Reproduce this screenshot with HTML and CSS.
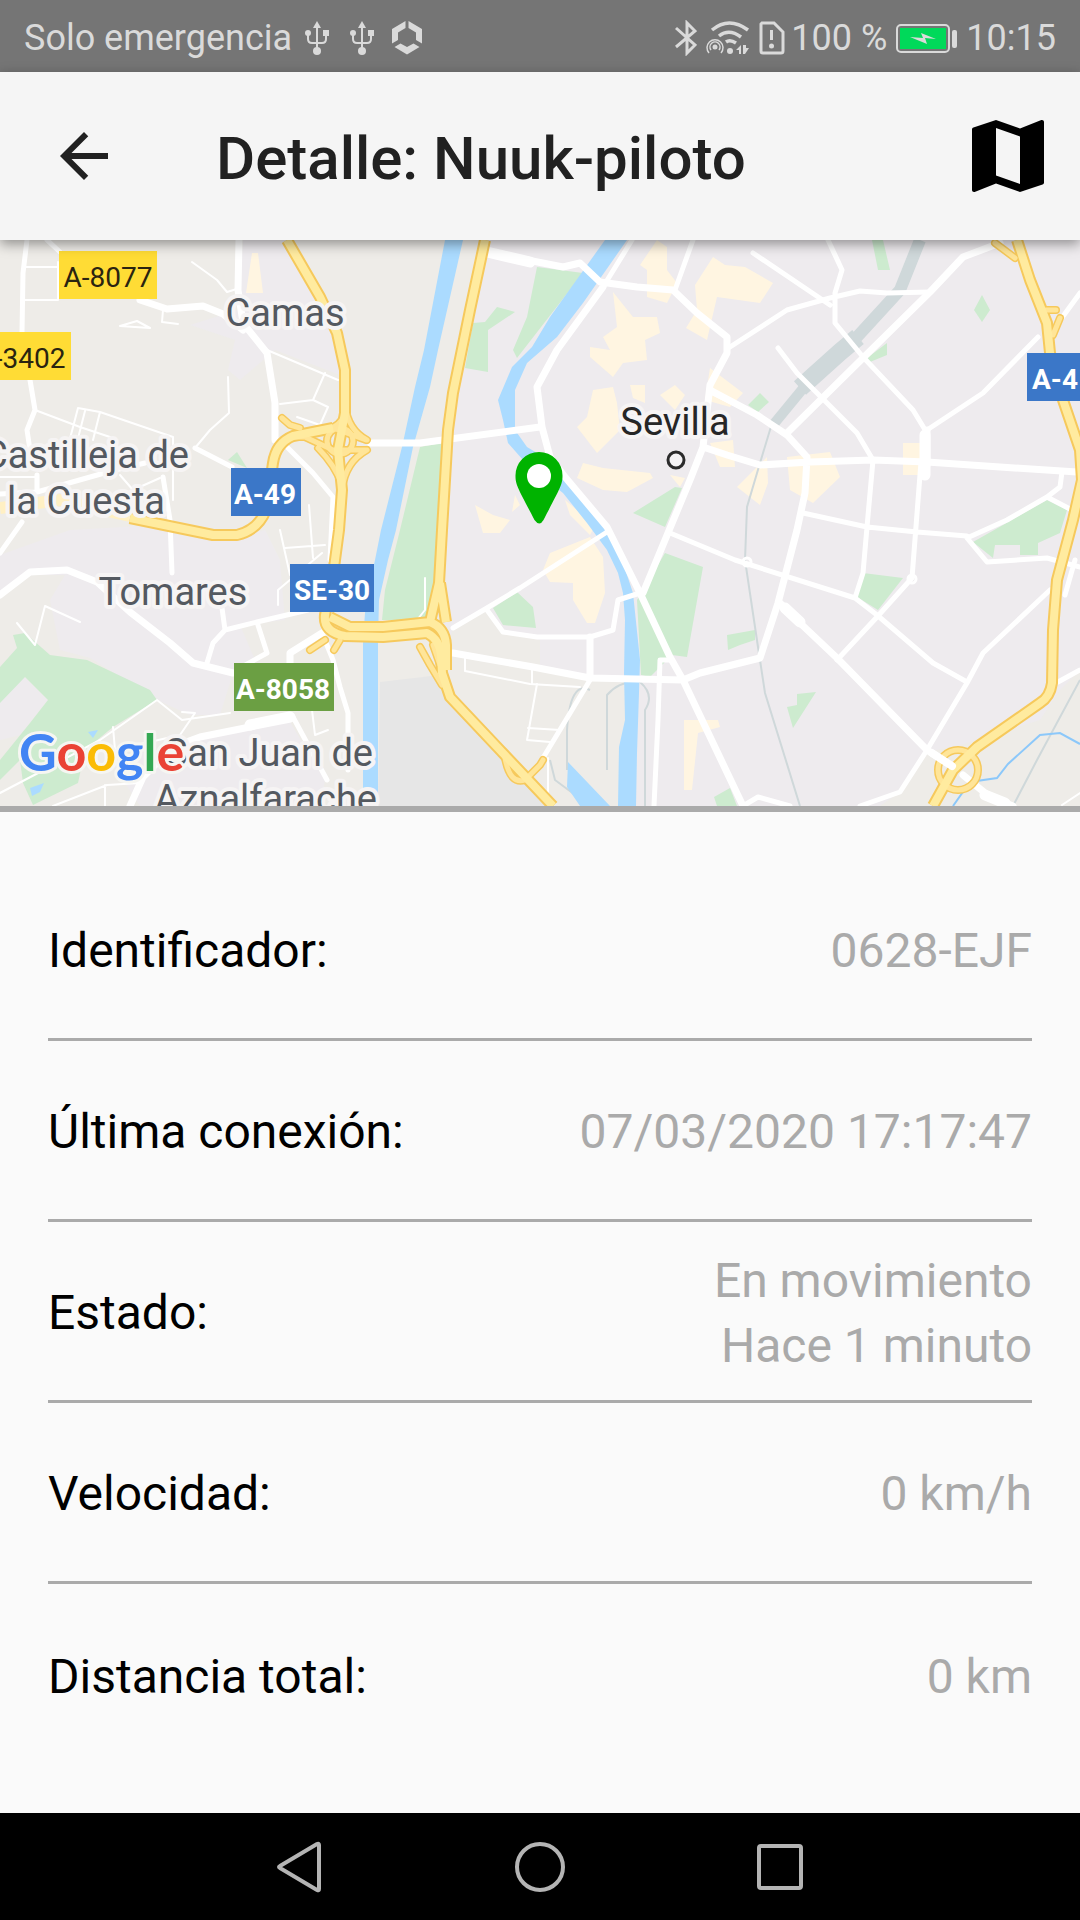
FILE: index.html
```html
<!DOCTYPE html>
<html lang="es">
<head>
<meta charset="utf-8">
<meta name="viewport" content="width=device-width, initial-scale=1">
<title>Detalle: Nuuk-piloto</title>
<link rel="stylesheet" href="styles.css">
</head>
<body>
<div class="status">
  <div class="status-group">
    <span>Solo emergencia</span>
    <svg class="usb" width="24" height="36" viewBox="0 0 24 36" aria-hidden="true"><path d="M12 5v26M3 12v7q0 4 4 4h10q4 0 4-4v-7" fill="none" stroke="currentColor" stroke-width="2"/><path d="M12 1l4 7H8z"/><circle cx="3" cy="13" r="3"/><path d="M18 10h6v6h-6z"/><circle cx="12" cy="31" r="4"/></svg>
    <svg class="usb" width="24" height="36" viewBox="0 0 24 36" aria-hidden="true"><path d="M12 5v26M3 12v7q0 4 4 4h10q4 0 4-4v-7" fill="none" stroke="currentColor" stroke-width="2"/><path d="M12 1l4 7H8z"/><circle cx="3" cy="13" r="3"/><path d="M18 10h6v6h-6z"/><circle cx="12" cy="31" r="4"/></svg>
    <svg width="32" height="36" viewBox="0 0 32 36" aria-hidden="true"><path d="M14.500 1v7L7 12.500V20l-6 3.500V9zM17.500 1v7l7.500 4.500V20l6 3.500V9zM3.500 27l6-3.500 6.500 3.500 6.500-3.500 6 3.500L16 34.500z"/></svg>
  </div>
  <div class="status-group">
    <svg width="22" height="36" viewBox="0 0 22 36" aria-hidden="true"><path d="M1 8l19 17-8 8V3l8 8L1 27" fill="none" stroke="currentColor" stroke-width="3"/></svg>
    <svg class="wifi" width="46" height="36" viewBox="0 0 46 36" aria-hidden="true"><g fill="none" stroke="currentColor"><path d="M7 10q17-14 36 0M14 16q10-8 22 1M21 22q4-3 10 1" stroke-width="3.500"/><path d="M4 33a8 8 0 1 1 12 0M6 30a5 5 0 1 1 8 0" stroke-width="1.500"/></g><circle cx="10" cy="27" r="2.500"/><circle cx="25" cy="31" r="3"/><path d="M36 25v9h-2v-4h-3zM38 25v9h2l4-6h-3v-3z"/></svg>
    <svg class="sim" width="26" height="36" viewBox="0 0 26 36" aria-hidden="true"><path d="M3 3h12l9 9v19q0 2-2 2H4q-2 0-2-2V4z" fill="none" stroke="currentColor" stroke-width="3"/><path d="M11 10h3v10h-3z"/><circle cx="12.500" cy="26" r="2.500"/></svg>
    <span class="charge">100 %</span>
    <svg width="62" height="36" viewBox="0 0 62 36" aria-hidden="true"><rect x="1" y="5" width="52" height="27" rx="4" fill="none" stroke="currentColor" stroke-width="2"/><rect x="4" y="8" width="46" height="21" fill="#00d95a"/><path d="M14 17l13 1-2-5 15 6-11-1 2 6z"/><rect x="56" y="10" width="5" height="18" rx="2"/></svg>
    <span class="clock">10:15</span>
  </div>
</div>

<header class="bar">
  <button type="button" aria-label="Volver"><svg width="72" height="72" viewBox="0 0 24 24" fill="#212121"><path d="M20 11H7.830l5.590-5.590L12 4l-8 8 8 8 1.410-1.410L7.830 13H20v-2z"/></svg></button>
  <h1>Detalle: Nuuk-piloto</h1>
  <button type="button" aria-label="Ver mapa"><svg width="96" height="96" viewBox="0 0 24 24"><path d="M20.500 3l-.16.030L15 5.100 9 3 3.360 4.900c-.21.070-.36.250-.36.480V20.500c0 .28.220.5.500.5l.16-.03L9 18.900l6 2.100 5.640-1.900c.21-.07.360-.25.360-.48V3.500c0-.28-.22-.5-.5-.5zM15 19l-6-2.110V5l6 2.110V19z"/></svg></button>
</header>

<main>
<svg class="map" viewBox="0 240 1080 566" role="img" aria-label="Mapa de Sevilla">
  <rect class="urban" y="240" width="1080" height="566"/>
  <g class="rural">
    <path d="M0 240H485L453 393 440 590 445 650 453 628 487 610 503 632 540 640V668L590 680 625 680V806H0z"/>
    <path d="M1080 670L1060 690 1040 720 960 745 927 752 900 792 880 806H1080z"/>
  </g>
  <g class="urban">
    <path d="M243 240H290L325 300 340 375 275 350 240 380 228 370 235 340 190 325 238 310z"/>
    <path d="M0 555L70 530 160 525 230 540 265 530 280 560 285 620 240 625 255 660 233 673 220 715 190 715 157 700 90 658 60 650 50 600 65 575 30 575 0 598z"/>
    <path d="M0 690L25 677 48 700 20 735 0 740zM110 760L200 740 290 722 325 780 320 806H140z"/>
  </g>
  <path class="field" d="M380 682L440 675 450 700 545 806H378z"/>
  <g class="park">
    <path d="M13 635L25 633 50 655 87 660 150 690 157 700 113 727 85 750 78 783 33 805 23 783 20 760 0 780 0 760 30 723 48 700 25 677 0 703V667L17 648z"/>
    <path d="M537 267L583 273 517 358 513 350 527 317zM473 323L485 322 497 307 515 312 488 330V372L465 368z"/>
    <path d="M420 447L442 443 437 590 425 620H382L385 590 400 530zM633 513L675 487 682 488 665 527z"/>
    <path d="M665 553L703 567 687 657 672 655 650 677 641 675 637 600zM493 608L517 592 533 607 536 628 503 625z"/>
    <path d="M872 240H883L890 270H878zM982 295L990 310 982 322 974 310zM760 393L769 402 758 412 748 405zM887 343V355L870 362 867 358z"/>
    <path d="M863 573L903 578 878 610 857 597zM973 542L1047 500 1067 510 1060 533 1038 543V555H1020V545H995L993 558z"/>
    <path d="M727 635L755 630V640L740 645 728 650zM787 707L797 705V694L816 692 793 728zM714 797L730 788 737 806H717zM228 460L237 452 247 468z"/>
  </g>
  <g class="centre">
    <path d="M657 240L667 247V270L677 283 667 303 647 297V270L640 265zM613 292L633 317H657L660 333 645 340 647 360 623 363 613 377 590 357V347L610 350 603 337 617 327z"/>
    <path d="M593 390L613 387 617 403 620 430 597 453 577 427 587 417zM583 463L603 468 650 473 653 478 627 492 603 490 577 478zM630 385H645V403L633 398z"/>
    <path d="M713 257L725 265 745 267 773 283 760 303 717 297 707 340 686 328 697 310 695 285zM660 395L675 385 685 395 675 410z"/>
    <path d="M787 457L830 452 840 477 813 503 790 490zM737 487L767 457 768 483 760 505zM903 443H920V475H903zM710 368L743 393 730 407 705 400zM710 443L733 440 735 467H720z"/>
    <path d="M550 553L590 537 603 557 605 593 595 623H587L573 600V583L550 582 543 570zM475 505L493 515 510 520 500 533H483zM515 495L520 505 512 512zM565 500L595 525 590 535 570 515z"/>
    <path d="M684 720H718L720 727 698 733 692 790H684zM252 253H258L263 293H246zM670 475L685 478 680 487z"/>
  </g>
  <g class="rail">
    <path d="M920 240L900 290 857 337" stroke-width="12"/>
    <path d="M858 337L840 352 800 388" stroke-width="18"/>
    <path d="M810 380L773 425" stroke-width="10"/>
    <path d="M773 420L760 463 747 507 745 560 758 647 765 693 800 806M1080 680L1037 760 1013 806M590 690Q570 680 567 730V770M607 770V695Q620 680 640 682Q655 695 645 710V806M550 760L555 780 590 806" stroke-width="2"/>
  </g>
  <g class="water">
    <path d="M445 240L424 350 415 387 402 447 381 530 375 560 366 600 363 640V806H378V640L379 600 388 560 396 530 413 447 430 387 438 350 463 240z"/>
    <path d="M605 240L550 317 532 347 512 367 498 400 503 420 508 443 523 460 540 475 563 493 587 523 607 550 618 573 623 593 625 620 624 673 625 720 619 747 618 806H636L637 753 639 693 640 660 633 593 623 563 605 527 567 483 537 453 527 447 515 430V390L527 363 557 337 583 303 627 240z"/>
    <path d="M568 762L610 806H580L567 787zM88 732L98 730 93 738zM30 788L44 783 40 792 32 796z"/>
    <path d="M953 806L970 782 997 778 1008 764 1040 735 1060 733 1080 744" fill="none" stroke="#8cc8fa" stroke-width="2"/>
  </g>

  <g class="street">
    <g stroke-width="2">
      <path d="M192 262L217 280 227 292 240 288M25 267H58M25 300H58V262M120 326L137 321 150 328zM178 324L162 322 163 310M267 350L338 380M325 373L313 400 280 404M313 400L328 407 320 425 297 417M228 377L229 413 210 430 195 448M35 410L80 427 110 437M78 408L100 412 173 437V500M78 408L67 450M100 412L93 440M85 411L75 450M0 477H37M120 475L133 490 160 478"/>
      <path d="M45 606L35 645 17 623M45 606L80 622M0 793L40 772 100 740 157 700 182 720 230 713M113 727L115 750 180 735 195 713 182 712M53 806L107 785 140 783M105 785V806M280 530L290 575M285 548L325 545M309 505L313 558M322 553L278 590V605M312 710L315 735 328 730M465 657V671L530 684 580 687M537 684L527 740 550 742M528 728L560 730M532 667V684M548 758V792M425 578V610L417 620M1062 805L1080 793"/>
    </g>
    <g stroke-width="5">
      <path d="M27 240L23 273 22 332 30 380 35 410 27 430 30 450M47 240L60 252M195 448L232 467M283 443L313 473 333 497 330 560M37 475V492L0 494M37 492L115 470 145 463M163 477L170 520 172 573M0 553L22 522M222 608L225 630 213 643 207 663M225 630L257 622 308 610M257 622L267 653 240 668M322 633L333 660 340 687 348 713V770M293 717L327 780"/>
      <path d="M632 240L603 287M693 240L675 290M753 253L830 305M730 347L787 310 830 298 860 291 887 293 930 292M828 240L842 270 835 293V323L863 357 913 410 927 433M778 348L797 373 822 398 857 433 873 460 867 527 863 573 855 598M927 430L983 393 1038 337M1053 330L1080 293M921 462L912 578 877 617 837 660M803 513L867 527 917 532 967 536M967 538L1007 520 1047 497 1060 487 1062 472M1047 497L1070 509M967 538L987 562 1047 558 1080 567M1065 595L1075 560M670 533L735 560 855 598 877 615 933 663 967 682M1050 590L983 653 967 683 927 750 900 792 860 806M743 806L758 797 790 806M1058 682L1080 670"/>
      <path d="M453 628L487 608 520 588 607 532M487 610L503 632 537 637H590L613 630 618 600 640 593M590 680L543 758M670 660H660L658 720 654 806M713 393L757 415"/>
    </g>
    <g stroke-width="7">
      <path d="M239 240L238 290 243 323 267 353 275 403 275 440M140 300L167 309 203 306 223 314 243 330M0 595L30 572 67 570 97 582 130 612 170 643 193 663 233 673M322 633L290 653V663M290 717L250 727 200 737 173 747 143 777 130 806"/>
      <path d="M487 252L563 267 580 263 600 282 637 287 673 290 697 313 727 337V353L710 385 703 447M603 287L557 350 537 387 542 427 550 457 565 477 607 527 640 593 670 657 683 680 743 806M370 443H420L540 427M710 390L757 415 787 435 807 457 805 493 797 530 778 603 760 658 700 673 683 680 590 678 533 667 453 653M703 447L690 480 643 593M703 447L727 455 760 465 810 462 873 460 927 462 1000 467 1077 472M1000 243L963 257 930 292 863 358 787 433M927 430V465M590 637V678M780 603L800 623 837 658 927 750 950 765M963 775L990 797 1013 806"/>
    </g>
    <path d="M250 725L290 717M487 252L530 262M785 608L800 622M925 435V475M985 795L1005 803" stroke-width="11"/>
    <circle cx="912" cy="579" r="4" stroke-width="3"/><circle cx="747" cy="562" r="4" stroke-width="3"/>
  </g>

  <g class="highway-edge">
    <path d="M287 240L320 297 337 333 345 370V413L338 450 342 490 339 530 333 575 325 615Q323 632 345 636L383 637 427 633Q440 640 441 655L442 673 450 697 500 750 553 806"/>
    <path d="M330 617L350 627H383L430 622Q445 628 446 645V670M485 240L470 310 453 393 448 430 442 530 439 583 430 622M440 583L446 622"/>
    <path d="M130 518L213 535H237Q258 530 266 510L273 463Q276 443 293 436L333 428M1017 240L1030 280 1047 323 1050 353 1063 400 1080 450 1082 480 1073 520 1057 580 1053 630 1052 683Q1050 697 1040 703L977 747 953 770 933 806"/>
  </g>
  <g class="ramp-edge">
    <path d="M290 437H305L333 450 366 450M333 428L366 440M345 405Q348 430 367 440M345 413Q342 425 325 431M342 490Q345 462 367 450M342 485Q335 465 318 448M282 418L290 425 300 428M505 758Q510 785 525 780L540 765 543 760M420 647L430 665 442 685M325 640L310 650M340 640L334 650M995 243L1015 258M1046 310L1056 310M1053 335L1060 318M433 645L440 665"/>
    <circle cx="340" cy="441" r="13"/><circle cx="958" cy="770" r="20"/>
  </g>
  <g class="ramp">
    <path d="M290 437H305L333 450 366 450M333 428L366 440M345 405Q348 430 367 440M345 413Q342 425 325 431M342 490Q345 462 367 450M342 485Q335 465 318 448M282 418L290 425 300 428M505 758Q510 785 525 780L540 765 543 760M420 647L430 665 442 685M325 640L310 650M340 640L334 650M995 243L1015 258M1046 310L1056 310M1053 335L1060 318M433 645L440 665"/>
    <circle cx="340" cy="441" r="13"/><circle cx="958" cy="770" r="20"/>
  </g>
  <g class="highway">
    <path d="M287 240L320 297 337 333 345 370V413L338 450 342 490 339 530 333 575 325 615Q323 632 345 636L383 637 427 633Q440 640 441 655L442 673 450 697 500 750 553 806"/>
    <path d="M330 617L350 627H383L430 622Q445 628 446 645V670M485 240L470 310 453 393 448 430 442 530 439 583 430 622M440 583L446 622"/>
    <path d="M130 518L213 535H237Q258 530 266 510L273 463Q276 443 293 436L333 428M1017 240L1030 280 1047 323 1050 353 1063 400 1080 450 1082 480 1073 520 1057 580 1053 630 1052 683Q1050 697 1040 703L977 747 953 770 933 806"/>
    <path class="tunnel" d="M0 508L60 500 130 516"/>
  </g>
  <path class="street" d="M932 753L952 766" stroke-width="8"/>

  <g class="place">
    <text x="285" y="326" text-anchor="middle">Camas</text>
    <text x="189" y="468" text-anchor="end">Castilleja de</text>
    <text x="165" y="514" text-anchor="end">la Cuesta</text>
    <text x="173" y="605" text-anchor="middle">Tomares</text>
    <text x="373" y="766" text-anchor="end">San Juan de</text>
    <text x="377" y="812" text-anchor="end">Aznalfarache</text>
    <text class="city" x="675" y="435" text-anchor="middle">Sevilla</text>
  </g>
  <circle cx="676" cy="460" r="8" fill="#f5f3f5" stroke="#2b2b2b" stroke-width="3"/>

  <g class="shield">
    <rect x="59" y="251" width="98" height="48" fill="#ffdc35"/><text class="dark" x="108" y="287">A-8077</text>
    <rect x="-30" y="332" width="101" height="48" fill="#ffdc35"/><text class="dark" x="21" y="368">A-3402</text>
    <rect x="231" y="468" width="70" height="48" fill="#3b77c8"/><text x="265" y="504">A-49</text>
    <rect x="290" y="564" width="84" height="48" fill="#3b77c8"/><text x="332" y="600">SE-30</text>
    <rect x="234" y="663" width="100" height="48" fill="#6b9f43"/><text x="283" y="699">A-8058</text>
    <rect x="1027" y="353" width="60" height="48" fill="#3b77c8"/><text x="1055" y="389">A-4</text>
  </g>

  <text class="brand" x="19" y="771"><tspan fill="#4285f4">G</tspan><tspan fill="#ea4335">o</tspan><tspan fill="#fbbc05">o</tspan><tspan fill="#4285f4">g</tspan><tspan fill="#34a853">l</tspan><tspan fill="#ea4335">e</tspan></text>

  <path fill="#00b300" d="M539 452a23.500 23.500 0 0 1 23.500 24c0 9-3 13-19 44q-4 7-9 0c-16-31-19-35-19-44a23.500 23.500 0 0 1 23.500-24z"/>
  <circle cx="539" cy="476" r="12" fill="#fff"/>
</svg>

<dl class="details">
  <div class="row"><dt>Identificador:</dt><dd>0628-EJF</dd></div>
  <div class="row"><dt>Última conexión:</dt><dd>07/03/2020 17:17:47</dd></div>
  <div class="row"><dt>Estado:</dt><dd>En movimiento<br>Hace 1 minuto</dd></div>
  <div class="row"><dt>Velocidad:</dt><dd>0 km/h</dd></div>
  <div class="row"><dt>Distancia total:</dt><dd>0 km</dd></div>
</dl>
</main>

<nav class="keys" aria-label="Sistema">
  <button type="button" aria-label="Atrás"><svg width="52" height="52" viewBox="0 0 52 52"><path d="M45 4v44q0 2-2 1L6 27q-2-1 0-2L43 3q2-1 2 1z"/></svg></button>
  <button type="button" aria-label="Inicio"><svg width="52" height="52" viewBox="0 0 52 52"><circle cx="26" cy="26" r="23"/></svg></button>
  <button type="button" aria-label="Recientes"><svg width="52" height="52" viewBox="0 0 52 52"><rect x="5" y="5" width="42" height="42" rx="2"/></svg></button>
</nav>
</body>
</html>
```
FILE: styles.css
```css
* { box-sizing: border-box; }

body {
  margin: 0;
  min-height: 100vh;
  display: flex;
  flex-direction: column;
  background: #fafafa;
  color: #000;
  font-family: Roboto, "Liberation Sans", sans-serif;
}

button {
  display: flex;
  padding: 0;
  border: 0;
  background: none;
}

/* System status bar */
.status {
  display: flex;
  justify-content: space-between;
  height: 72px;
  padding: 4px 24px 0;
  background: #757575;
  color: #dadada;
  font-size: 36px;
  line-height: 68px;
}
.status-group { display: flex; align-items: center; }
.status svg { fill: currentColor; flex: none; }
.usb { margin: 0 8px 0 13px; }
.usb + .usb { margin-right: 17px; }
.wifi { margin: 0 8px; }
.charge { margin: 0 9px 0 6px; }
.clock { margin-left: 8px; }

/* App bar */
.bar {
  position: relative;
  z-index: 1;
  display: flex;
  align-items: center;
  height: 168px;
  padding: 0 24px 0 48px;
  background: #f5f5f5;
  box-shadow: 0 4px 12px rgba(0, 0, 0, .4);
}
.bar h1 {
  flex: 1;
  margin: 6px 0 0 96px;
  color: #212121;
  font-size: 60px;
  font-weight: 500;
  line-height: 72px;
}

main { flex: 1; }

/* Map */
.map {
  display: block;
  width: 100%;
  border-bottom: 6px solid #aaa;
  box-sizing: content-box;
}
.urban { fill: #eeebee; }
.rural { fill: #eeece8; }
.field { fill: #e6e6e6; }
.park { fill: #cdebcf; }
.centre { fill: #fff5e1; }
.water { fill: #abdbff; }
.rail { fill: none; stroke: #cfd8da; }
.street { fill: none; stroke: #fff; stroke-linejoin: round; stroke-linecap: round; }
.highway-edge, .highway, .ramp-edge, .ramp { fill: none; stroke-linejoin: round; }
.highway-edge { stroke: #f6c95c; stroke-width: 12px; }
.ramp-edge { stroke: #f6c95c; stroke-width: 8px; stroke-linecap: round; }
.ramp { stroke: #ffe598; stroke-width: 5px; stroke-linecap: round; }
.highway { stroke: #ffeb9f; stroke-width: 8px; }
.highway .tunnel { stroke: #fff0c4; stroke-width: 12px; }
.place {
  fill: #545960;
  stroke: #f6f4f4;
  stroke-width: 8px;
  stroke-linejoin: round;
  paint-order: stroke;
  font-size: 38px;
}
.place .city { fill: #262626; }
.shield {
  fill: #fff;
  font-size: 28px;
  font-weight: 700;
  text-anchor: middle;
}
.shield .dark { fill: #2a2410; font-weight: 400; }
.brand {
  font-family: Lato, sans-serif;
  font-size: 52px;
  font-weight: 700;
  stroke: #f6f6f2;
  stroke-width: 6px;
  stroke-linejoin: round;
  paint-order: stroke;
}

/* Detail list */
.details {
  margin: 0;
  padding: 48px;
  font-size: 48px;
  line-height: 65px;
}
.row {
  display: flex;
  justify-content: space-between;
  align-items: center;
  min-height: 181px;
  padding-top: 3px;
  border-bottom: 3px solid #aaa;
}
.row:last-child { border-bottom: 0; }
.row dd { margin: 0; color: #aaa; text-align: right; }

/* System navigation keys */
.keys {
  display: flex;
  justify-content: center;
  align-items: center;
  gap: 188px;
  height: 108px;
  background: #000;
}
.keys svg { fill: none; stroke: #b4b4b4; stroke-width: 4px; }
```
